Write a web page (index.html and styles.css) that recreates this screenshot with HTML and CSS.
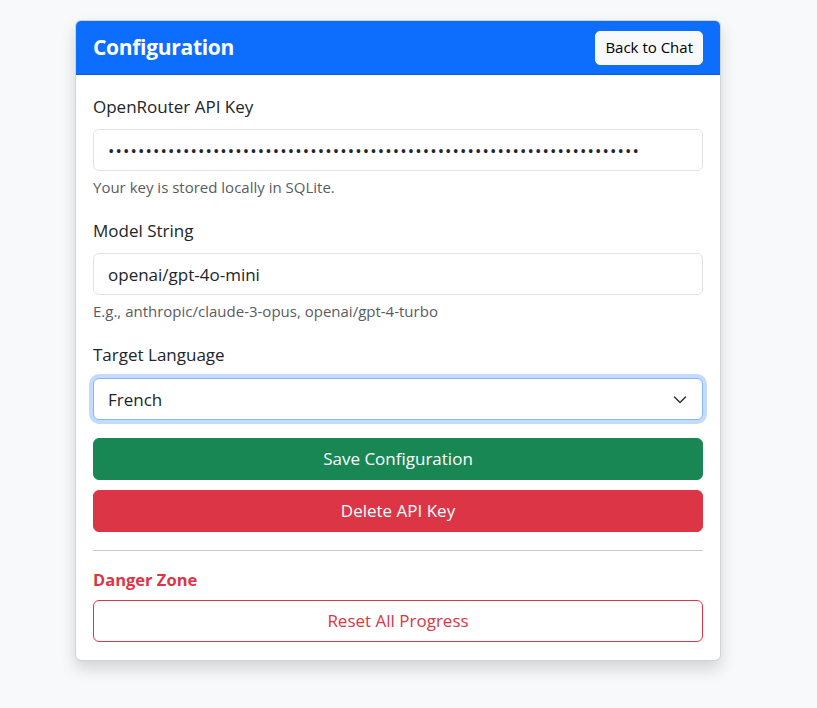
FILE: index.html
```html
<!DOCTYPE html>
<html lang="en">
<head>
<meta charset="utf-8">
<title>Configuration</title>
<link rel="stylesheet" href="styles.css">
</head>
<body>
<div class="page">
  <div class="card">
    <div class="card-header">
      <h4 class="title">Configuration</h4>
      <button class="btn-back" type="button">Back to Chat</button>
    </div>
    <div class="card-body">
      <div class="field">
        <label class="label" for="key">OpenRouter API Key</label>
        <input class="control password" type="password" id="key" value="sk-or-v1-0123456789abcdef0123456789abcdef0123456789abcdef0123456789abcd">
        <div class="help">Your key is stored locally in SQLite.</div>
      </div>
      <div class="field">
        <label class="label" for="model">Model String</label>
        <input class="control" type="text" id="model" value="openai/gpt-4o-mini">
        <div class="help">E.g., anthropic/claude-3-opus, openai/gpt-4-turbo</div>
      </div>
      <div class="field field-last">
        <label class="label label-last" for="lang">Target Language</label>
        <div class="select-wrap">
          <select class="control select is-focused" id="lang">
            <option>French</option>
            <option>Spanish</option>
            <option>German</option>
          </select>
          <svg class="chevron" width="16" height="12" viewBox="0 0 16 12" aria-hidden="true">
            <path d="M2.5 4 L8 9.5 L13.5 4" fill="none" stroke="#343a40" stroke-width="1.6" stroke-linecap="round" stroke-linejoin="round"/>
          </svg>
        </div>
      </div>
      <div class="actions">
        <button class="btn btn-success" type="button">Save Configuration</button>
        <button class="btn btn-danger" type="button">Delete API Key</button>
      </div>
      <hr class="divider">
      <h6 class="danger-title">Danger Zone</h6>
      <button class="btn btn-outline-danger" type="button">Reset All Progress</button>
    </div>
  </div>
</div>
</body>
</html>
```

FILE: styles.css
```css
* {
  box-sizing: border-box;
}

html, body {
  margin: 0;
  padding: 0;
}

body {
  background: #f8f9fa;
  font-family: "Open Sans", "Noto Sans", "Liberation Sans", sans-serif;
  font-size: 17px;
  color: #212529;
  height: 708px;
  overflow: hidden;
}

.page {
  padding: 20px 0 0 75px;
}

.card {
  width: 646px;
  background: #fff;
  border: 1px solid rgba(0, 0, 0, 0.175);
  border-radius: 6px;
  box-shadow: 0 8px 16px rgba(0, 0, 0, 0.15);
  overflow: hidden;
}

.card-header {
  display: flex;
  align-items: center;
  justify-content: space-between;
  background: #0d6efd;
  height: 54px;
  padding: 0 17px;
  border-bottom: 1px solid rgba(0, 0, 0, 0.175);
}

.title {
  margin: 0;
  color: #fff;
  font-size: 21px;
  font-weight: 700;
  line-height: 1.2;
  letter-spacing: -0.3px;
}

.btn-back {
  font-family: inherit;
  font-size: 15px;
  color: #000;
  background: #f8f9fa;
  border: 1px solid #f8f9fa;
  border-radius: 5px;
  height: 34px;
  padding: 0 9px;
  line-height: 1;
}

.card-body {
  padding: 20px 17px 18px;
}

.field {
  display: flex;
  flex-direction: column;
  margin-bottom: 21px;
}

.field-last {
  margin-bottom: 18px;
}

.label {
  line-height: 24px;
  margin-bottom: 10px;
  font-size: 17px;
}

.label-last {
  margin-bottom: 11px;
}

.control {
  display: block;
  width: 100%;
  height: 42px;
  font-family: inherit;
  font-size: 17px;
  color: #212529;
  background: #fff;
  border: 1px solid #dee2e6;
  border-radius: 6px;
  padding: 0 14px;
  outline: none;
}

.password {
  letter-spacing: 1.1px;
}

.help {
  margin-top: 6px;
  font-size: 15px;
  line-height: 21px;
  color: #595c5f;
}

.select-wrap {
  position: relative;
}

.select {
  appearance: none;
  -webkit-appearance: none;
  padding-right: 40px;
}

.is-focused {
  border-color: #86b7fe;
  box-shadow: 0 0 0 4px rgba(13, 110, 253, 0.25);
}

.chevron {
  position: absolute;
  right: 15px;
  top: 15px;
  pointer-events: none;
}

.actions {
  display: flex;
  flex-direction: column;
  gap: 10px;
}

.btn {
  display: block;
  width: 100%;
  height: 42px;
  font-family: inherit;
  font-size: 17px;
  line-height: 24px;
  border-radius: 6px;
  border: 1px solid transparent;
  padding: 8px 12px;
  text-align: center;
}

.btn-success {
  background: #198754;
  border-color: #198754;
  color: #fff;
}

.btn-danger {
  background: #dc3545;
  border-color: #dc3545;
  color: #fff;
}

.btn-outline-danger {
  background: #fff;
  border-color: #dc3545;
  color: #dc3545;
}

.divider {
  margin: 18px 0 0;
  border: 0;
  border-top: 1px solid #c8c9ca;
}

.danger-title {
  margin: 19px 0 10px;
  font-size: 16.5px;
  font-weight: 700;
  line-height: 20px;
  color: #dc3545;
}
```
